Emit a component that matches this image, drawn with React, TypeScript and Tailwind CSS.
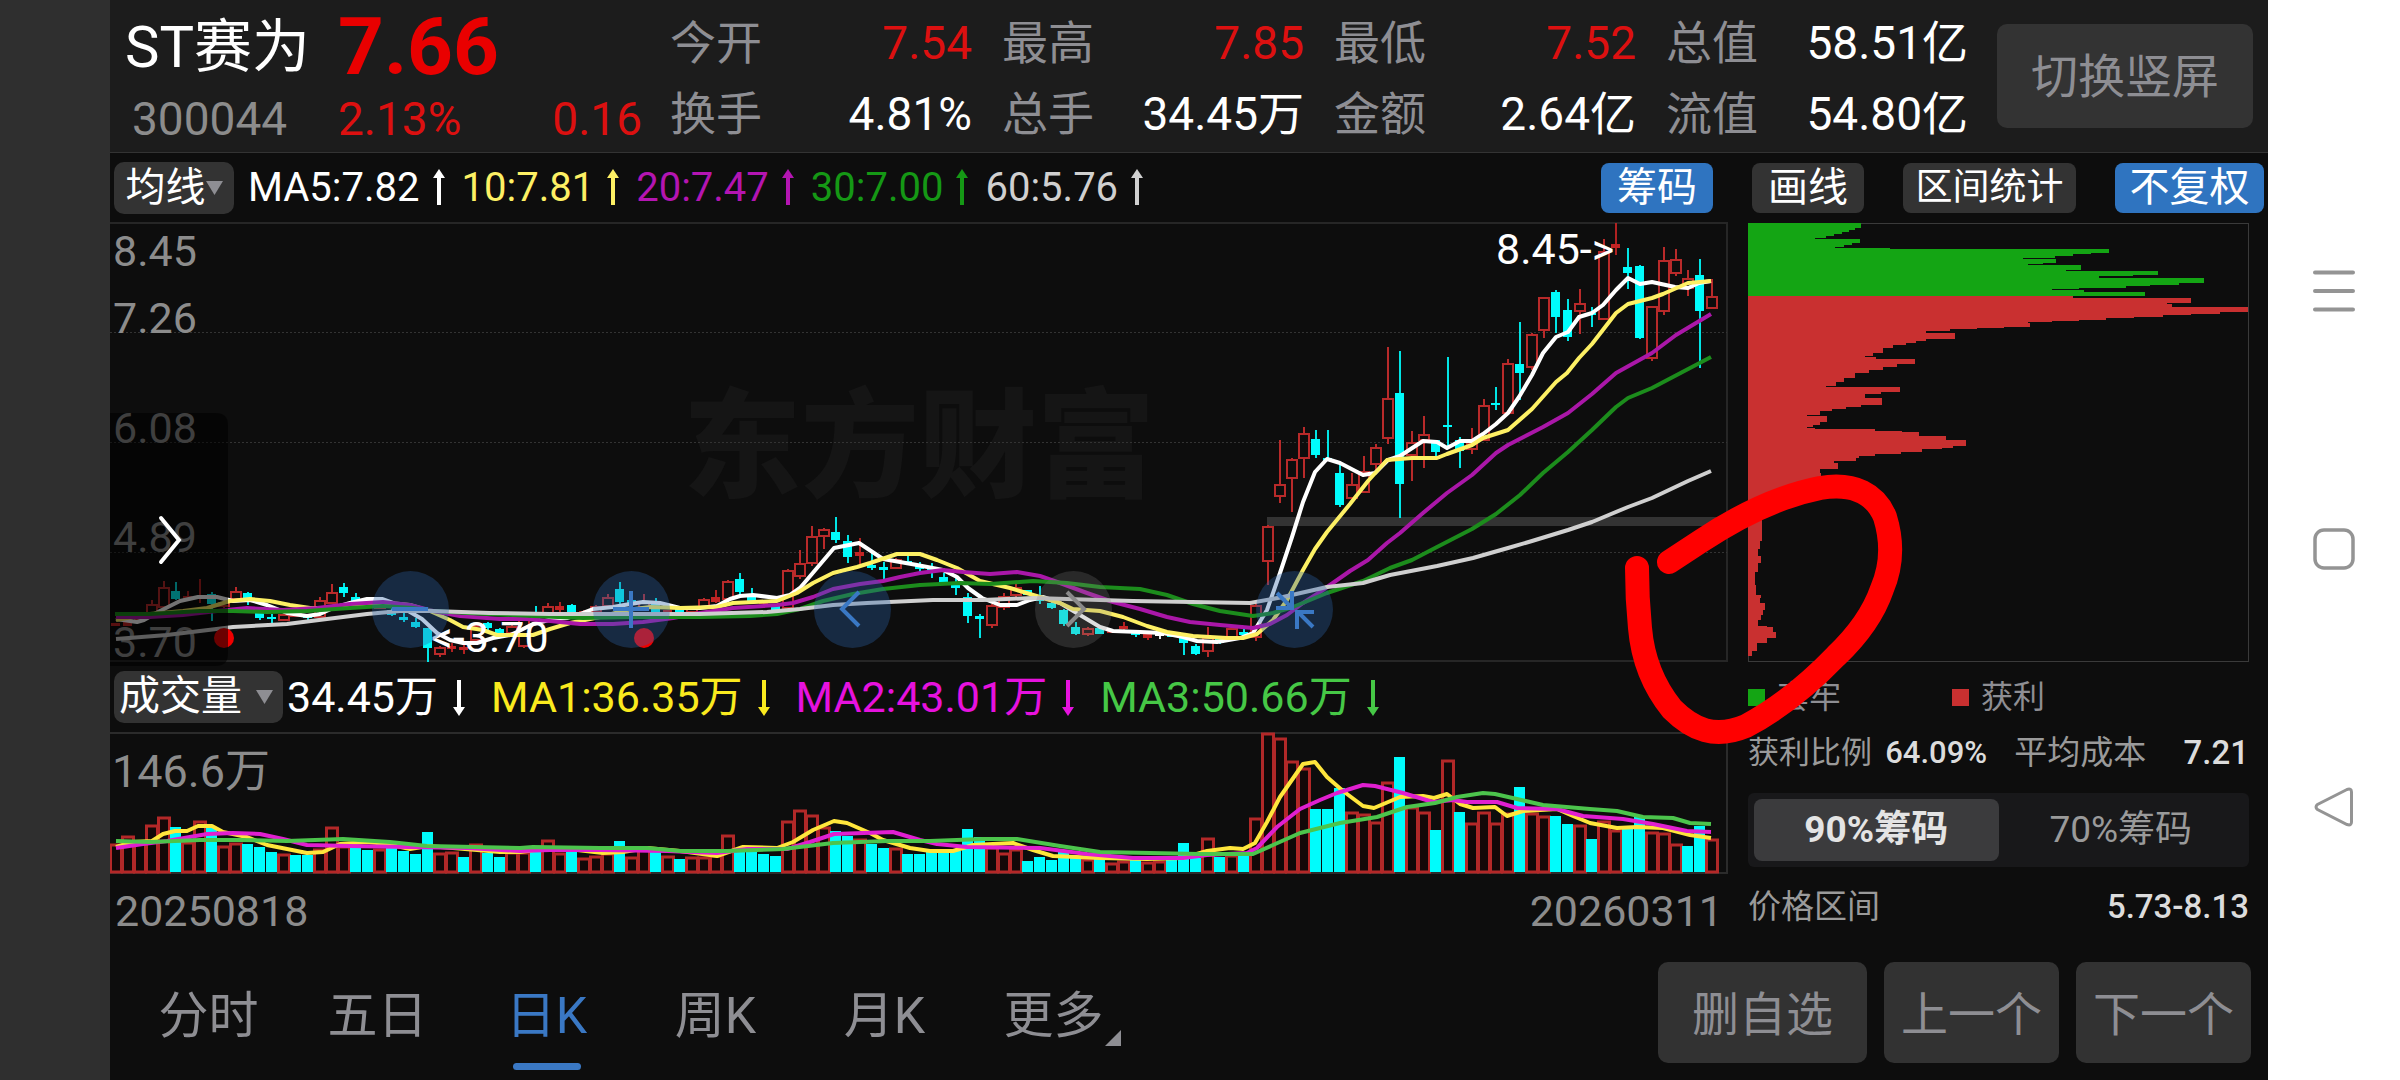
import { useState } from "react";
import clsx from "clsx";

type Candle = [kind: string, high: number, top: number, bottom: number, low: number];
type Point = [x: number, y: number];

// r = hollow red, f = solid red, c = cyan, w = unchanged
const candles: Candle[] = [
  ["f", 400, 400, 403, 403], ["f", 399, 399, 403, 403], ["r", 390, 394, 397, 397], ["r", 377, 381, 390, 391],
  ["r", 358, 364, 384, 385], ["c", 359, 368, 376, 377], ["f", 368, 373, 376, 377], ["f", 356, 374, 376, 380],
  ["c", 369, 371, 381, 398], ["r", 376, 379, 383, 385], ["r", 364, 368, 376, 376], ["c", 369, 370, 379, 382],
  ["c", 389, 390, 395, 397], ["c", 391, 394, 396, 403], ["r", 390, 391, 397, 398], ["r", 388, 389, 393, 393],
  ["c", 391, 392, 395, 397], ["r", 374, 377, 394, 395], ["r", 361, 369, 380, 380], ["c", 360, 364, 370, 374],
  ["c", 370, 374, 378, 380], ["c", 377, 378, 380, 382], ["r", 378, 379, 385, 385], ["c", 385, 387, 392, 393],
  ["c", 390, 394, 397, 399], ["c", 395, 399, 404, 405], ["c", 405, 405, 425, 439], ["r", 423, 424, 431, 434],
  ["f", 420, 423, 426, 429], ["f", 422, 424, 427, 431], ["r", 401, 402, 417, 418], ["c", 399, 400, 405, 407],
  ["c", 405, 406, 410, 411], ["r", 402, 403, 410, 411], ["r", 392, 396, 423, 425], ["c", 383, 392, 396, 398],
  ["r", 380, 383, 391, 392], ["f", 379, 383, 387, 389], ["c", 381, 382, 389, 390], ["f", 387, 388, 391, 391],
  ["r", 382, 383, 389, 389], ["r", 371, 374, 383, 383], ["c", 359, 366, 379, 383], ["c", 375, 377, 381, 383],
  ["r", 371, 378, 384, 385], ["c", 375, 381, 389, 390], ["f", 387, 387, 390, 390], ["c", 386, 386, 390, 390],
  ["r", 385, 385, 389, 389], ["r", 375, 376, 385, 385], ["f", 367, 374, 379, 380], ["r", 357, 358, 376, 376],
  ["c", 350, 356, 369, 371], ["c", 365, 371, 378, 378], ["f", 377, 379, 381, 385], ["c", 382, 382, 388, 388],
  ["r", 346, 347, 385, 387], ["r", 327, 340, 353, 356], ["r", 303, 313, 340, 343], ["r", 305, 306, 313, 326],
  ["c", 294, 309, 317, 320], ["c", 312, 318, 334, 340], ["f", 315, 329, 333, 341], ["c", 329, 342, 345, 347],
  ["c", 339, 344, 347, 357], ["r", 335, 336, 345, 345], ["c", 332, 338, 341, 342], ["c", 339, 343, 346, 349],
  ["c", 340, 344, 349, 355], ["c", 350, 354, 360, 362], ["c", 355, 360, 365, 372], ["c", 370, 374, 393, 400],
  ["c", 391, 393, 396, 415], ["r", 381, 382, 402, 405], ["r", 370, 373, 384, 387], ["r", 361, 364, 372, 376],
  ["c", 367, 367, 372, 372], ["c", 363, 372, 378, 381], ["c", 378, 380, 385, 386], ["c", 386, 387, 401, 403],
  ["c", 399, 404, 411, 412], ["r", 404, 405, 411, 413], ["c", 404, 405, 411, 411], ["f", 407, 407, 410, 410],
  ["f", 399, 403, 406, 410], ["c", 409, 410, 412, 414], ["f", 410, 411, 415, 417], ["w", 409, 411, 413, 416],
  ["c", 411, 411, 414, 414], ["c", 415, 415, 420, 432], ["c", 421, 423, 431, 432], ["r", 404, 414, 428, 434],
  ["c", 415, 415, 420, 421], ["r", 403, 405, 414, 414], ["c", 406, 409, 412, 415], ["r", 378, 382, 414, 418],
  ["r", 302, 303, 338, 362], ["r", 217, 261, 273, 280], ["r", 235, 236, 255, 289], ["r", 204, 210, 235, 255],
  ["c", 207, 216, 232, 235], ["c", 207, 235, 238, 238], ["c", 242, 250, 282, 284], ["r", 250, 261, 275, 275],
  ["r", 233, 248, 269, 269], ["r", 221, 224, 241, 250], ["r", 124, 175, 215, 221], ["c", 128, 170, 261, 295],
  ["r", 208, 219, 232, 258], ["r", 193, 211, 217, 245], ["c", 217, 217, 229, 237], ["c", 134, 202, 204, 224],
  ["c", 214, 217, 228, 245], ["r", 205, 220, 226, 231], ["r", 176, 182, 217, 217], ["c", 164, 180, 182, 187],
  ["r", 136, 140, 190, 190], ["c", 99, 141, 150, 177], ["r", 110, 111, 144, 147], ["r", 74, 74, 107, 115],
  ["c", 67, 69, 94, 110], ["c", 76, 87, 114, 118], ["r", 66, 80, 88, 111], ["c", 84, 90, 92, 104],
  ["r", 16, 28, 96, 96], ["f", 0, 21, 25, 32], ["c", 25, 44, 50, 66], ["c", 42, 43, 115, 116],
  ["r", 83, 83, 135, 138], ["r", 24, 37, 88, 92], ["r", 26, 36, 50, 53], ["r", 47, 55, 65, 73],
  ["c", 36, 52, 88, 145], ["r", 56, 73, 85, 85],
];

const volumeTops = [
  112, 104, 110, 93, 85, 95, 110, 89, 96, 114, 111, 112, 115, 120, 122, 123, 123, 117, 95, 114, 116, 118, 117, 116,
  119, 122, 100, 121, 120, 125, 112, 121, 125, 120, 120, 119, 108, 121, 120, 126, 124, 121, 109, 125, 115, 119,
  124, 127, 125, 125, 123, 103, 120, 120, 122, 124, 89, 78, 83, 95, 99, 104, 107, 112, 116, 116, 122, 122, 120,
  119, 119, 97, 105, 115, 121, 117, 129, 125, 128, 119, 125, 127, 126, 131, 129, 128, 130, 129, 127, 111, 126,
  106, 125, 123, 124, 86, 1, 6, 29, 36, 77, 77, 56, 80, 82, 90, 50, 25, 75, 80, 98, 28, 80, 91, 80, 91, 81, 55,
  81, 84, 84, 92, 93, 107, 89, 98, 97, 85, 100, 101, 112, 114, 94, 107,
];

const fallingDays = new Set([
  5, 8, 11, 12, 13, 15, 16, 20, 21, 23, 24, 25, 26, 29, 31, 32, 35, 38, 42, 45, 47, 52, 53, 54, 55, 60, 61, 63, 64,
  66, 67, 68, 69, 70, 71, 72, 76, 77, 78, 79, 80, 82, 85, 88, 89, 90, 92, 94, 100, 101, 102, 107, 110, 112, 117,
  120, 121, 123, 126, 127, 131, 132,
]);

const priceLines: { color: string; points: Point[] }[] = [
  {
    color: "#ffffff",
    points: [
      [6, 396], [27, 399], [34, 397], [48, 389], [70, 378], [88, 374], [107, 374], [123, 378], [140, 377], [157, 382],
      [177, 390], [197, 393], [210, 391], [223, 385], [240, 380], [257, 376], [272, 376], [283, 380], [300, 389],
      [312, 396], [327, 410], [340, 417], [353, 420], [367, 420], [383, 415], [400, 412], [407, 409], [423, 401],
      [443, 396], [457, 395], [470, 391], [483, 386], [503, 384], [520, 381], [533, 379], [550, 380], [570, 385],
      [590, 385], [607, 383], [620, 376], [630, 373], [643, 372], [667, 375], [680, 372], [690, 365], [707, 345],
      [724, 325], [749, 320], [773, 336], [790, 339], [807, 342], [833, 347], [847, 354], [858, 365], [872, 375],
      [890, 382], [907, 382], [920, 377], [933, 374], [950, 380], [970, 392], [990, 404], [1003, 408], [1030, 409],
      [1053, 410], [1073, 414], [1087, 418], [1107, 419], [1130, 415], [1143, 410], [1157, 387], [1170, 350],
      [1182, 314], [1193, 279], [1205, 249], [1217, 236], [1230, 240], [1253, 252], [1265, 250], [1278, 237],
      [1290, 233], [1313, 218], [1327, 219], [1337, 225], [1350, 218], [1362, 218], [1373, 211], [1386, 201],
      [1398, 190], [1409, 174], [1422, 152], [1433, 130], [1446, 114], [1458, 109], [1469, 94], [1482, 90],
      [1493, 82], [1506, 67], [1518, 55], [1530, 61], [1542, 59], [1565, 64], [1578, 65], [1589, 60], [1601, 58],
    ],
  },
  {
    color: "#fdf064",
    points: [
      [6, 397], [40, 391], [73, 388], [97, 385], [120, 378], [140, 376], [160, 378], [180, 382], [200, 385],
      [223, 385], [257, 382], [280, 380], [300, 382], [320, 388], [340, 397], [353, 404], [373, 407], [387, 412],
      [423, 412], [440, 406], [460, 400], [490, 394], [517, 387], [540, 384], [570, 385], [607, 384], [623, 380],
      [667, 378], [687, 370], [703, 360], [723, 350], [747, 344], [760, 340], [787, 331], [810, 331], [827, 337],
      [847, 345], [870, 358], [900, 365], [930, 374], [950, 380], [963, 386], [990, 388], [1013, 394], [1037, 403],
      [1057, 409], [1083, 413], [1117, 415], [1133, 415], [1147, 411], [1163, 397], [1177, 377], [1193, 347],
      [1205, 326], [1217, 309], [1240, 281], [1258, 258], [1277, 237], [1302, 235], [1327, 235], [1337, 231],
      [1362, 222], [1373, 215], [1398, 207], [1422, 186], [1446, 159], [1457, 150], [1469, 135], [1482, 121],
      [1506, 90], [1518, 81], [1542, 75], [1553, 71], [1578, 60], [1601, 58],
    ],
  },
  {
    color: "#aa17a8",
    points: [
      [6, 394], [40, 394], [73, 392], [107, 388], [137, 385], [173, 387], [207, 385], [240, 381], [273, 379],
      [300, 382], [323, 388], [350, 393], [390, 396], [417, 396], [440, 398], [470, 401], [503, 401], [533, 399],
      [563, 395], [590, 390], [623, 385], [667, 382], [683, 380], [703, 374], [723, 366], [750, 361], [773, 358],
      [790, 354], [810, 350], [833, 347], [853, 349], [880, 351], [907, 349], [930, 353], [950, 360], [977, 370],
      [1003, 379], [1030, 386], [1057, 394], [1080, 399], [1110, 402], [1143, 405], [1160, 401], [1177, 392],
      [1193, 380], [1210, 369], [1240, 348], [1258, 337], [1277, 320], [1290, 310], [1313, 290], [1337, 270],
      [1362, 252], [1386, 230], [1398, 222], [1433, 204], [1458, 190], [1482, 171], [1506, 150], [1542, 130],
      [1566, 112], [1601, 91],
    ],
  },
  {
    color: "#1c8c1c",
    points: [
      [5, 391], [40, 391], [90, 388], [123, 388], [157, 389], [197, 388], [240, 385], [273, 383], [303, 385],
      [323, 388], [357, 390], [423, 393], [473, 395], [523, 394], [590, 394], [640, 393], [667, 391], [690, 386],
      [713, 378], [743, 371], [773, 366], [810, 362], [850, 360], [880, 361], [923, 358], [957, 360], [990, 364],
      [1030, 366], [1057, 372], [1083, 381], [1110, 388], [1143, 393], [1163, 390], [1183, 384], [1217, 370],
      [1253, 358], [1280, 345], [1302, 337], [1327, 324], [1362, 306], [1386, 291], [1410, 272], [1433, 250],
      [1458, 229], [1482, 207], [1506, 184], [1518, 175], [1542, 165], [1601, 134],
    ],
  },
  {
    color: "#cfcfcf",
    points: [
      [6, 416], [57, 412], [123, 404], [177, 401], [217, 396], [257, 391], [290, 388], [323, 388], [380, 390],
      [440, 391], [523, 391], [590, 391], [657, 389], [690, 386], [723, 382], [757, 380], [823, 377], [873, 377],
      [923, 375], [957, 376], [1023, 378], [1140, 380], [1173, 374], [1217, 364], [1253, 360], [1280, 352],
      [1327, 343], [1363, 335], [1398, 325], [1422, 318], [1458, 307], [1482, 299], [1518, 284], [1542, 275],
      [1578, 258], [1601, 248],
    ],
  },
];

const volumeLines: { color: string; points: Point[] }[] = [
  {
    color: "#ffe63c",
    points: [
      [6, 115], [23, 110], [42, 109], [53, 102], [65, 99], [77, 99], [88, 94], [102, 94], [113, 100], [137, 105],
      [157, 113], [177, 117], [197, 121], [213, 120], [230, 112], [257, 110], [277, 112], [300, 117], [318, 114],
      [343, 116], [367, 118], [390, 120], [410, 120], [440, 116], [467, 118], [493, 121], [513, 120], [537, 116],
      [570, 119], [607, 124], [633, 115], [667, 116], [683, 110], [703, 98], [724, 89], [737, 91], [760, 101],
      [773, 108], [800, 116], [820, 119], [843, 119], [863, 113], [903, 111], [923, 118], [943, 124], [990, 126],
      [1037, 127], [1073, 126], [1097, 119], [1120, 116], [1133, 117], [1145, 111], [1157, 90], [1170, 65],
      [1193, 32], [1205, 30], [1217, 45], [1233, 59], [1253, 74], [1264, 76], [1290, 65], [1313, 64], [1324, 66],
      [1337, 62], [1350, 72], [1363, 76], [1385, 75], [1397, 84], [1413, 79], [1447, 77], [1463, 84], [1480, 91],
      [1507, 96], [1527, 95], [1553, 96], [1580, 103], [1601, 106],
    ],
  },
  {
    color: "#e01fd0",
    points: [
      [6, 116], [33, 112], [57, 109], [97, 102], [123, 101], [150, 102], [173, 107], [197, 113], [240, 114],
      [300, 115], [357, 116], [410, 119], [440, 118], [490, 118], [557, 119], [607, 121], [637, 117], [677, 117],
      [700, 110], [724, 102], [783, 100], [810, 108], [827, 112], [857, 115], [930, 116], [977, 122], [1023, 126],
      [1073, 126], [1097, 123], [1137, 121], [1147, 116], [1167, 95], [1190, 77], [1210, 68], [1227, 61],
      [1253, 53], [1265, 54], [1293, 61], [1323, 70], [1343, 68], [1357, 70], [1387, 70], [1407, 76], [1447, 77],
      [1473, 84], [1513, 87], [1543, 92], [1577, 99], [1601, 100],
    ],
  },
  {
    color: "#4cc44c",
    points: [
      [6, 109], [40, 110], [90, 108], [130, 108], [177, 109], [233, 107], [280, 110], [317, 114], [410, 116],
      [423, 115], [490, 116], [537, 116], [570, 119], [617, 119], [673, 117], [723, 111], [777, 109], [820, 109],
      [873, 107], [907, 107], [950, 114], [990, 120], [1040, 121], [1090, 122], [1143, 122], [1163, 113],
      [1190, 101], [1210, 96], [1230, 91], [1267, 85], [1297, 75], [1325, 71], [1347, 65], [1373, 61], [1385, 62],
      [1407, 67], [1433, 73], [1480, 77], [1507, 79], [1533, 85], [1563, 86], [1580, 91], [1601, 92],
    ],
  },
];

const trappedShape =
  "113,0 113,3 107,5 101,7 94,9 86,11 78,13 67,15 112,16 112,18 104,20 96,22 87,24 142,25 361,26 361,29 343,30 325,31 307,33 275,35 262,36 308,36 308,39 295,40 280,41 266,42 333,42 333,45 318,47 302,48 410,48 410,51 385,52 351,53 319,55 456,55 456,59 431,60 402,62 378,63 331,65 304,66 336,67 336,69 397,69 397,72 370,73 0,73";

const profitShape =
  "325,73 386,75 443,75 443,79 419,80 394,81 424,81 424,84 500,84 500,88 472,89 443,91 415,92 386,94 358,95 331,97 304,98 280,99 256,100 282,100 282,103 256,104 229,105 202,106 178,108 150,110 207,110 207,114 178,116 168,118 158,120 145,122 135,125 125,130 117,133 101,134 128,134 167,136 167,139 149,141 135,144 121,147 107,150 96,155 88,159 78,163 152,164 152,167 133,169 117,171 92,175 134,175 134,179 113,182 98,184 84,186 72,188 59,192 79,193 79,196 72,199 65,202 59,204 67,205 127,206 154,208 171,209 171,213 150,213 198,213 198,216 218,217 218,220 205,223 194,225 174,226 153,229 127,231 111,233 108,235 86,238 90,240 90,243 72,246 56,250 73,250 73,253 62,258 40,264 14,280 14,312 12,318 10,326 13,333 10,340 7,349 8,362 13,372 12,375 17,380 15,387 13,392 10,397 19,403 25,404 28,409 19,415 9,420 9,424 4,428 0,433";

const quotes = [
  { label: "今开", value: "7.54", red: true },
  { label: "最高", value: "7.85", red: true },
  { label: "最低", value: "7.52", red: true },
  { label: "总值", value: "58.51亿", red: false },
  { label: "换手", value: "4.81%", red: false },
  { label: "总手", value: "34.45万", red: false },
  { label: "金额", value: "2.64亿", red: false },
  { label: "流值", value: "54.80亿", red: false },
];

const priceAverages = [
  { text: "MA5:7.82", color: "text-white" },
  { text: "10:7.81", color: "text-[#fdf064]" },
  { text: "20:7.47", color: "text-[#b415b2]" },
  { text: "30:7.00", color: "text-[#159815]" },
  { text: "60:5.76", color: "text-[#d0d0d0]" },
];

const volumeAverages = [
  { text: "34.45万", color: "text-white" },
  { text: "MA1:36.35万", color: "text-[#faea1e]" },
  { text: "MA2:43.01万", color: "text-[#e612de]" },
  { text: "MA3:50.66万", color: "text-[#46c846]" },
];

const periods = ["分时", "五日", "日K", "周K", "月K", "更多"];

const toPoints = (points: Point[]) => points.map((p) => p.join(",")).join(" ");
const centerOf = (index: number) => 6 + index * 12;

// one horizontal bar per price level, so the outline moves in steps
const toSteps = (shape: string, startY: number) =>
  `M0 ${startY}` +
  shape
    .split(" ")
    .map((pair) => {
      const [x, y] = pair.split(",");
      return `V${y}H${x}`;
    })
    .join("") +
  "Z";

function Arrow({ down = false }: { down?: boolean }) {
  return (
    <svg width="12" height="38" viewBox="0 0 12 38" className={clsx("shrink-0", down && "rotate-180")} aria-hidden="true">
      <path d="M6 6V36" stroke="currentColor" strokeWidth="4" />
      <path d="M6 0L12 9H0Z" fill="currentColor" />
    </svg>
  );
}

function Triangle({ size }: { size: number }) {
  return (
    <svg width={size} height="14" viewBox="0 0 16 14" preserveAspectRatio="none" className="shrink-0" aria-hidden="true">
      <path d="M0 0H16L8 14Z" fill="#8e8e93" />
    </svg>
  );
}

function Header() {
  return (
    <header className="flex h-[153px] items-center border-b border-[#333] bg-[#1c1c1c] pr-[15px]">
      <div className="grid w-[560px] grid-cols-[228px_1fr] grid-rows-[76px_68px] items-center pt-[10px]">
        <h1 className="pl-[15px] text-[58px] leading-[76px] text-white">ST赛为</h1>
        <strong className="text-[80px] leading-[76px] font-bold text-[#e90000]">7.66</strong>
        <span className="pl-[22px] text-[46px] leading-[68px] text-[#8c8c8c]">300044</span>
        <div className="flex justify-between pr-[28px] text-[46px] leading-[68px] text-[#dc1010]">
          <span>2.13%</span>
          <span>0.16</span>
        </div>
      </div>
      <dl className="grid flex-1 grid-cols-4 gap-x-[30px] pt-[6px] text-[46px] leading-[71px]">
        {quotes.map((quote) => (
          <div key={quote.label} className="flex justify-between whitespace-nowrap">
            <dt className="text-[#8e8e93]">{quote.label}</dt>
            <dd className={quote.red ? "text-[#dc1010]" : "text-white"}>{quote.value}</dd>
          </div>
        ))}
      </dl>
      <button className="ml-[29px] h-[104px] w-[256px] rounded-[10px] bg-[#333] pt-[2px] text-[47px] text-[#8e8e93]">
        切换竖屏
      </button>
    </header>
  );
}

function Toolbar() {
  return (
    <div className="flex h-[70px] items-center justify-between pr-1 pl-1 text-[40px] leading-[50px] text-white">
      <div className="flex items-center">
        <button className="mr-[14px] flex h-[52px] w-[120px] items-center justify-center rounded-[10px] bg-[#333]">
          均线
          <Triangle size={17} />
        </button>
        <div className="flex gap-[17px]">
          {priceAverages.map((item) => (
            <span key={item.text} className={clsx("flex items-center gap-[13px]", item.color)}>
              {item.text}
              <Arrow />
            </span>
          ))}
        </div>
      </div>
      <div className="flex gap-[39px]">
        <button className="h-[50px] w-[112px] rounded-[8px] bg-[#2f74c0]">筹码</button>
        <button className="h-[50px] w-[112px] rounded-[8px] bg-[#333]">画线</button>
        <button className="h-[50px] w-[173px] rounded-[8px] bg-[#333] text-[37px]">区间统计</button>
        <button className="h-[50px] w-[149px] rounded-[8px] bg-[#2f74c0]">不复权</button>
      </div>
    </div>
  );
}

function CandleMark({ candle, index }: { candle: Candle; index: number }) {
  const [kind, high, top, bottom, low] = candle;
  const x = centerOf(index);
  if (kind === "r") {
    return (
      <g stroke="#b82a2a" strokeWidth="2" fill="none">
        <path d={`M${x} ${high}V${top}M${x} ${bottom}V${low}`} />
        <rect x={x - 5} y={top + 1} width="10" height={Math.max(bottom - top - 1, 2)} />
      </g>
    );
  }
  const color = kind === "f" ? "#c22424" : kind === "w" ? "#ffffff" : "#00fcfc";
  return (
    <g fill={color}>
      <rect x={x - 1} y={high} width="2" height={low - high} opacity="0.9" />
      <rect x={x - 5} y={top} width="9" height={bottom - top} />
    </g>
  );
}

function PriceChart() {
  return (
    <svg viewBox="0 0 1618 439" className="block h-auto w-full overflow-visible" role="img" aria-label="日K">
      <text x="573" y="265" fontSize="118" fontWeight="900" fill="#151515">东方财富</text>
      <path d="M0 0H1617V438H0" fill="none" stroke="#262626" strokeWidth="2" />
      <path d="M0 109.500H1617M0 219.500H1617M0 329.500H1617" stroke="#333" strokeDasharray="2 2" />
      <rect x="1157" y="294" width="460" height="9" fill="#333" />
      <g fill="#8c8c8c" fontSize="43">
        <text x="3" y="43">8.45</text>
        <text x="3" y="110">7.26</text>
        <text x="3" y="220">6.08</text>
        <text x="3" y="329">4.89</text>
        <text x="3" y="434">3.70</text>
      </g>
      {candles.map((candle, index) => (
        <CandleMark key={index} candle={candle} index={index} />
      ))}
      {priceLines.map((line) => (
        <polyline key={line.color} points={toPoints(line.points)} fill="none" stroke={line.color} strokeWidth="4" strokeLinejoin="round" />
      ))}
      <g fill="#fff" fontSize="43">
        <text x="321" y="429">&lt;-3.70</text>
        <text x="1386" y="41">8.45-&gt;</text>
      </g>
      <circle cx="114" cy="415" r="10" fill="#f00000" />
      <circle cx="534" cy="415" r="10" fill="#f00000" />
      <path d="M0 190H106Q118 190 118 202V431Q118 443 106 443H0Z" fill="#000" fillOpacity="0.55" />
      <path d="M51 295L69 317L51 339" fill="none" stroke="#fff" strokeWidth="4" strokeLinecap="round" />
    </svg>
  );
}

const overlayControls = [
  { label: "缩小", path: "M20 38H56" },
  { label: "放大", path: "M38 20V57M20 38H56" },
  { label: "左移", path: "M45 21L28 38L45 55" },
  { label: "右移", path: "M32 21L49 38L32 55" },
  { label: "收起", path: "M21 22L34 35M36 20V37H20M57 56L43 42M41 58V41H58" },
];

function ChartControls() {
  return (
    <div className="absolute inset-x-0 bottom-[14px] flex gap-[144px] pl-[262px]">
      {overlayControls.map((control) => (
        <button
          key={control.label}
          aria-label={control.label}
          className={clsx(
            "size-[77px] rounded-full",
            control.label === "右移" ? "bg-[#808080]/25 text-[#8a8a8a]" : "bg-[#2b60a5]/35 text-[#3a78c4]",
          )}
        >
          <svg viewBox="0 0 77 77" fill="none" stroke="currentColor" strokeWidth="4" aria-hidden="true">
            <path d={control.path} />
          </svg>
        </button>
      ))}
    </div>
  );
}

function VolumeHeader() {
  return (
    <div className="flex h-[70px] items-center pl-1 text-[43px] whitespace-nowrap">
      <button className="mr-[4px] flex h-[52px] w-[169px] items-center gap-[14px] rounded-[10px] bg-[#333] pl-[5px] text-[41px] text-white">
        成交量
        <Triangle size={17} />
      </button>
      <div className="flex gap-[26px]">
        {volumeAverages.map((item) => (
          <span key={item.text} className={clsx("flex items-center gap-[15px]", item.color)}>
            {item.text}
            <Arrow down />
          </span>
        ))}
      </div>
    </div>
  );
}

function VolumeChart() {
  return (
    <svg viewBox="0 0 1618 142" className="block h-auto w-full" role="img" aria-label="成交量">
      <path d="M0 1H1617V141H0" fill="none" stroke="#2b2b2b" strokeWidth="2" />
      <text x="2" y="55" fontSize="45" fill="#8c8c8c">146.6万</text>
      {volumeTops.map((top, index) => {
        const x = centerOf(index);
        return fallingDays.has(index) ? (
          <rect key={index} x={x - 6} y={top} width="11" height={140 - top} fill="#00fcfc" />
        ) : (
          <rect key={index} x={x - 5.5} y={top + 1} width="11" height={139 - top} fill="#120808" stroke="#b32828" strokeWidth="3" />
        );
      })}
      {volumeLines.map((line) => (
        <polyline key={line.color} points={toPoints(line.points)} fill="none" stroke={line.color} strokeWidth="4" strokeLinejoin="round" />
      ))}
    </svg>
  );
}

function ChipPanel() {
  const [range, setRange] = useState("90%");
  return (
    <aside className="w-[501px] shrink-0 text-[#9a9a9a]">
      <svg viewBox="0 0 501 439" className="block h-auto w-full" role="img" aria-label="筹码分布">
        <rect x="0.500" y="0.500" width="500" height="438" fill="none" stroke="#3a3a3a" />
        <path d={toSteps(trappedShape, 0)} fill="#14a514" />
        <path d={toSteps(profitShape, 73)} fill="#c93030" />
      </svg>
      <div className="flex h-[70px] items-center text-[32px] text-[#8e8e93]">
        <span className="flex w-[204px] items-center gap-[12px]">
          <i className="size-[17px] bg-[#14a514]" />
          套牢
        </span>
        <span className="flex items-center gap-[12px]">
          <i className="size-[17px] bg-[#c93030]" />
          获利
        </span>
      </div>
      <div className="flex h-[42px] items-center justify-between text-[33px] whitespace-nowrap">
        <span className="text-[31px]">获利比例</span>
        <b className="text-[31px] font-medium text-[#dcdcdc]">64.09%</b>
        <span className="ml-[14px]">平均成本</span>
        <b className="ml-[24px] font-medium text-[#dcdcdc]">7.21</b>
      </div>
      <div className="mt-[19px] flex h-[74px] rounded-[6px] bg-[#18181a] p-[6px] text-[37px]">
        {["90%", "70%"].map((value) => (
          <button
            key={value}
            onClick={() => setRange(value)}
            className={clsx(
              "flex-1 rounded-[8px]",
              range === value ? "bg-[#3b3b3d] font-bold text-[#e4e4e4]" : "text-[#9a9a9a]",
            )}
          >
            {value}筹码
          </button>
        ))}
      </div>
      <div className="mt-[15px] flex h-[50px] items-center justify-between text-[33px]">
        <span>价格区间</span>
        <b className="font-medium text-[#dcdcdc]">5.73-8.13</b>
      </div>
    </aside>
  );
}

function BottomBar() {
  const [active, setActive] = useState("日K");
  return (
    <div className="flex h-[132px] items-center justify-between pr-[17px] pl-[14px]">
      <nav className="flex h-full">
        {periods.map((period) => (
          <button
            key={period}
            onClick={() => setActive(period)}
            className={clsx(
              "relative w-[169px] pt-[4px] text-[50px]",
              period === active ? "text-[#3a78c4]" : "text-[#8e8e93]",
            )}
          >
            {period}
            {period === active && (
              <span className="absolute bottom-[10px] left-1/2 h-[7px] w-[68px] -translate-x-1/2 rounded-full bg-[#3a78c4]" />
            )}
            {period === "更多" && (
              <svg width="16" height="16" className="absolute right-[17px] bottom-[34px]" aria-hidden="true">
                <path d="M16 0V16H0Z" fill="#8e8e93" />
              </svg>
            )}
          </button>
        ))}
      </nav>
      <div className="flex gap-[17px] pb-[3px] text-[47px] text-[#8e8e93]">
        <button className="h-[101px] w-[209px] rounded-[10px] bg-[#323232] pt-[6px]">删自选</button>
        <button className="h-[101px] w-[175px] rounded-[10px] bg-[#323232] pt-[6px]">上一个</button>
        <button className="h-[101px] w-[175px] rounded-[10px] bg-[#323232] pt-[6px]">下一个</button>
      </div>
    </div>
  );
}

function SystemNav() {
  return (
    <nav className="flex w-[132px] shrink-0 flex-col items-center bg-white pt-[162px] text-[#949494]">
      <button aria-label="菜单" className="flex h-[258px] w-full items-center justify-center">
        <svg width="42" height="42" viewBox="0 0 42 42" stroke="currentColor" strokeWidth="4" strokeLinecap="round">
          <path d="M2 2.500H40M2 21H40M2 39.500H40" />
        </svg>
      </button>
      <button aria-label="主页" className="flex h-[258px] w-full items-center justify-center">
        <svg width="42" height="42" viewBox="0 0 42 42" fill="none" stroke="currentColor" strokeWidth="3.500">
          <rect x="2" y="2" width="38" height="38" rx="9" />
        </svg>
      </button>
      <button aria-label="返回" className="flex h-[258px] w-full items-center justify-center">
        <svg width="42" height="42" viewBox="0 0 42 42" fill="none" stroke="currentColor" strokeWidth="3">
          <path d="M34 3.500L4.500 18.500Q1.500 21 4.500 23.500L34 38.500Q38.500 40 38.500 36V6Q38.500 2 34 3.500Z" />
        </svg>
      </button>
    </nav>
  );
}

export default function App() {
  return (
    <div className="flex min-h-screen bg-[#0d0d0d] font-['Roboto','Noto_Sans_CJK_SC',sans-serif]">
      <div className="w-[110px] shrink-0 bg-[#2f2f2f]" />
      <main className="min-w-0 flex-1">
        <Header />
        <Toolbar />
        <div className="relative flex justify-between gap-[20px] pr-[19px]">
          <section className="min-w-0 flex-1">
            <div className="relative">
              <PriceChart />
              <ChartControls />
            </div>
            <VolumeHeader />
            <VolumeChart />
            <div className="flex h-[74px] items-center justify-between pr-[5px] pl-[5px] text-[43px] text-[#8c8c8c]">
              <time>20250818</time>
              <time>20260311</time>
            </div>
          </section>
          <ChipPanel />
          {/* freehand marker stroke */}
          <svg viewBox="0 0 2158 725" className="pointer-events-none absolute inset-0 w-full" aria-hidden="true">
            <path
              d="M1559 339L1591 318C1630 292 1670 273 1710 265C1745 259 1766 272 1775 294C1783 320 1781 345 1772 366C1763 392 1745 415 1726 433C1700 460 1670 485 1636 503C1605 516 1583 507 1562 486C1545 465 1533 440 1530 405C1528 385 1527 365 1527 345"
              fill="none"
              stroke="#ff0000"
              strokeWidth="24"
              strokeLinecap="round"
            />
          </svg>
        </div>
        <BottomBar />
      </main>
      <SystemNav />
    </div>
  );
}
